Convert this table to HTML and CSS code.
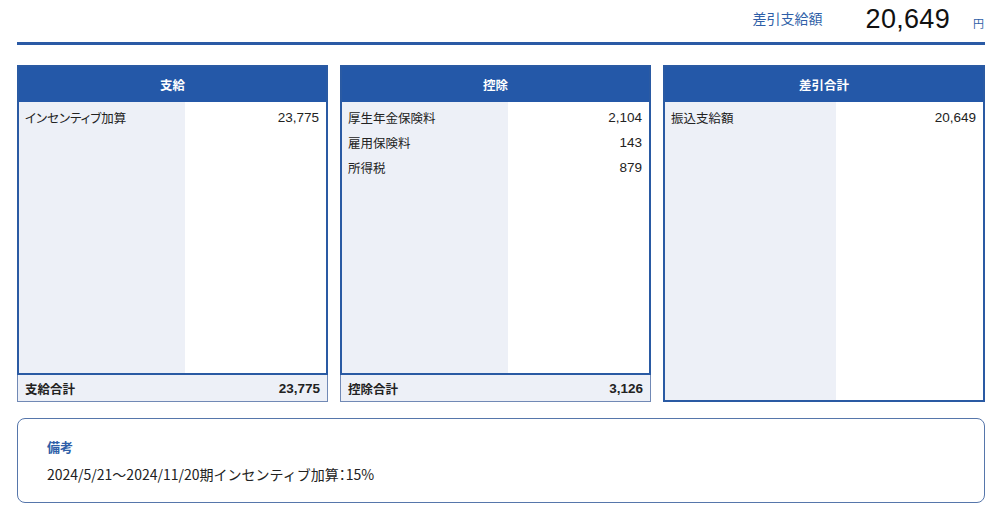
FILE: index.html
```html
<!DOCTYPE html>
<html lang="ja">
<head>
<meta charset="utf-8">
<title>給与明細</title>
<link rel="stylesheet" href="styles.css">
</head>
<body>
<div class="page">
  <div class="summary">
    <span class="summary-label">差引支給額</span>
    <span class="summary-amount">20,649</span>
    <span class="summary-unit">円</span>
  </div>
  <div class="cards">
    <section class="card">
      <div class="frame">
        <div class="card-head">支給</div>
        <div class="card-body">
          <div class="col-label">
            <div class="row">インセンティブ加算</div>
          </div>
          <div class="col-value">
            <div class="row">23,775</div>
          </div>
        </div>
      </div>
      <div class="total"><span>支給合計</span><span>23,775</span></div>
    </section>
    <section class="card">
      <div class="frame">
        <div class="card-head">控除</div>
        <div class="card-body">
          <div class="col-label">
            <div class="row">厚生年金保険料</div>
            <div class="row">雇用保険料</div>
            <div class="row">所得税</div>
          </div>
          <div class="col-value">
            <div class="row">2,104</div>
            <div class="row">143</div>
            <div class="row">879</div>
          </div>
        </div>
      </div>
      <div class="total"><span>控除合計</span><span>3,126</span></div>
    </section>
    <section class="card">
      <div class="frame">
        <div class="card-head">差引合計</div>
        <div class="card-body">
          <div class="col-label wide">
            <div class="row">振込支給額</div>
          </div>
          <div class="col-value">
            <div class="row">20,649</div>
          </div>
        </div>
      </div>
    </section>
  </div>
  <div class="remarks">
    <div class="remarks-title">備考</div>
    <div class="remarks-text">2024/5/21～2024/11/20期インセンティブ加算<span class="colon">：</span>15%</div>
  </div>
</div>
</body>
</html>
```

FILE: styles.css
```css
* { box-sizing: border-box; }
html, body { margin: 0; padding: 0; background: #fff; }
body {
  font-family: "Liberation Sans", "Noto Sans CJK JP", sans-serif;
  color: #222;
}
.page {
  width: 968px;
  margin-left: 17px;
}
.summary {
  display: flex;
  justify-content: flex-end;
  align-items: baseline;
  height: 45px;
  padding-top: 4px;
  border-bottom: 3px solid #2a5aa5;
  padding-right: 1px;
}
.summary-label {
  font-family: "Noto Sans CJK JP", sans-serif;
  font-size: 14px;
  color: #2f5fa8;
  margin-right: 43px;
  position: relative;
  top: -4px;
}
.summary-amount {
  font-size: 27px;
  color: #111;
  margin-right: 23px;
  letter-spacing: 0.3px;
}
.summary-unit {
  font-family: "Noto Sans CJK JP", sans-serif;
  font-size: 11px;
  color: #2f5fa8;
}
.cards {
  display: grid;
  grid-template-columns: 311px 311px 1fr;
  column-gap: 12px;
  margin-top: 20px;
  height: 337px;
}
.card {
  display: flex;
  flex-direction: column;
}
.frame {
  flex: 1;
  display: flex;
  flex-direction: column;
  border: 2px solid #2a5aa3;
}
.card-head {
  height: 35px;
  background: #2458a8;
  color: #fff;
  font-family: "Noto Sans CJK JP", sans-serif;
  font-weight: bold;
  font-size: 12.5px;
  display: flex;
  align-items: center;
  justify-content: center;
}
.card-body {
  flex: 1;
  display: flex;
}
.col-label {
  width: 166px;
  background: #edf0f7;
  padding: 3px 0 0 6px;
}
.col-label.wide { width: 171px; }
.col-value {
  flex: 1;
  padding: 3px 7px 0 0;
  text-align: right;
}
.row {
  height: 25px;
  line-height: 25px;
  font-size: 13.5px;
  color: #222;
}
.col-label .row {
  font-family: "Noto Sans CJK JP", sans-serif;
  font-size: 12.5px;
  font-feature-settings: "palt";
}
.total {
  height: 27px;
  display: flex;
  justify-content: space-between;
  align-items: center;
  background: #edf0f7;
  border: 1px solid #7189b5;
  border-top: none;
  padding: 0 7px 0 7px;
  font-weight: bold;
  font-size: 13.5px;
  color: #222;
}
.total span:first-child {
  font-family: "Noto Sans CJK JP", sans-serif;
  font-size: 12.5px;
}
.remarks {
  margin-top: 16px;
  height: 85px;
  border: 1px solid #5676ab;
  border-radius: 8px;
  padding: 19px 0 0 29px;
}
.remarks-title {
  font-family: "Noto Sans CJK JP", sans-serif;
  font-weight: bold;
  font-size: 13px;
  color: #2f5fa8;
  line-height: 18px;
}
.remarks-text {
  font-family: "Noto Sans CJK JP", sans-serif;
  font-size: 14px;
  color: #222;
  line-height: 18px;
  margin-top: 9px;
}
.colon { font-feature-settings: "palt"; }
```
